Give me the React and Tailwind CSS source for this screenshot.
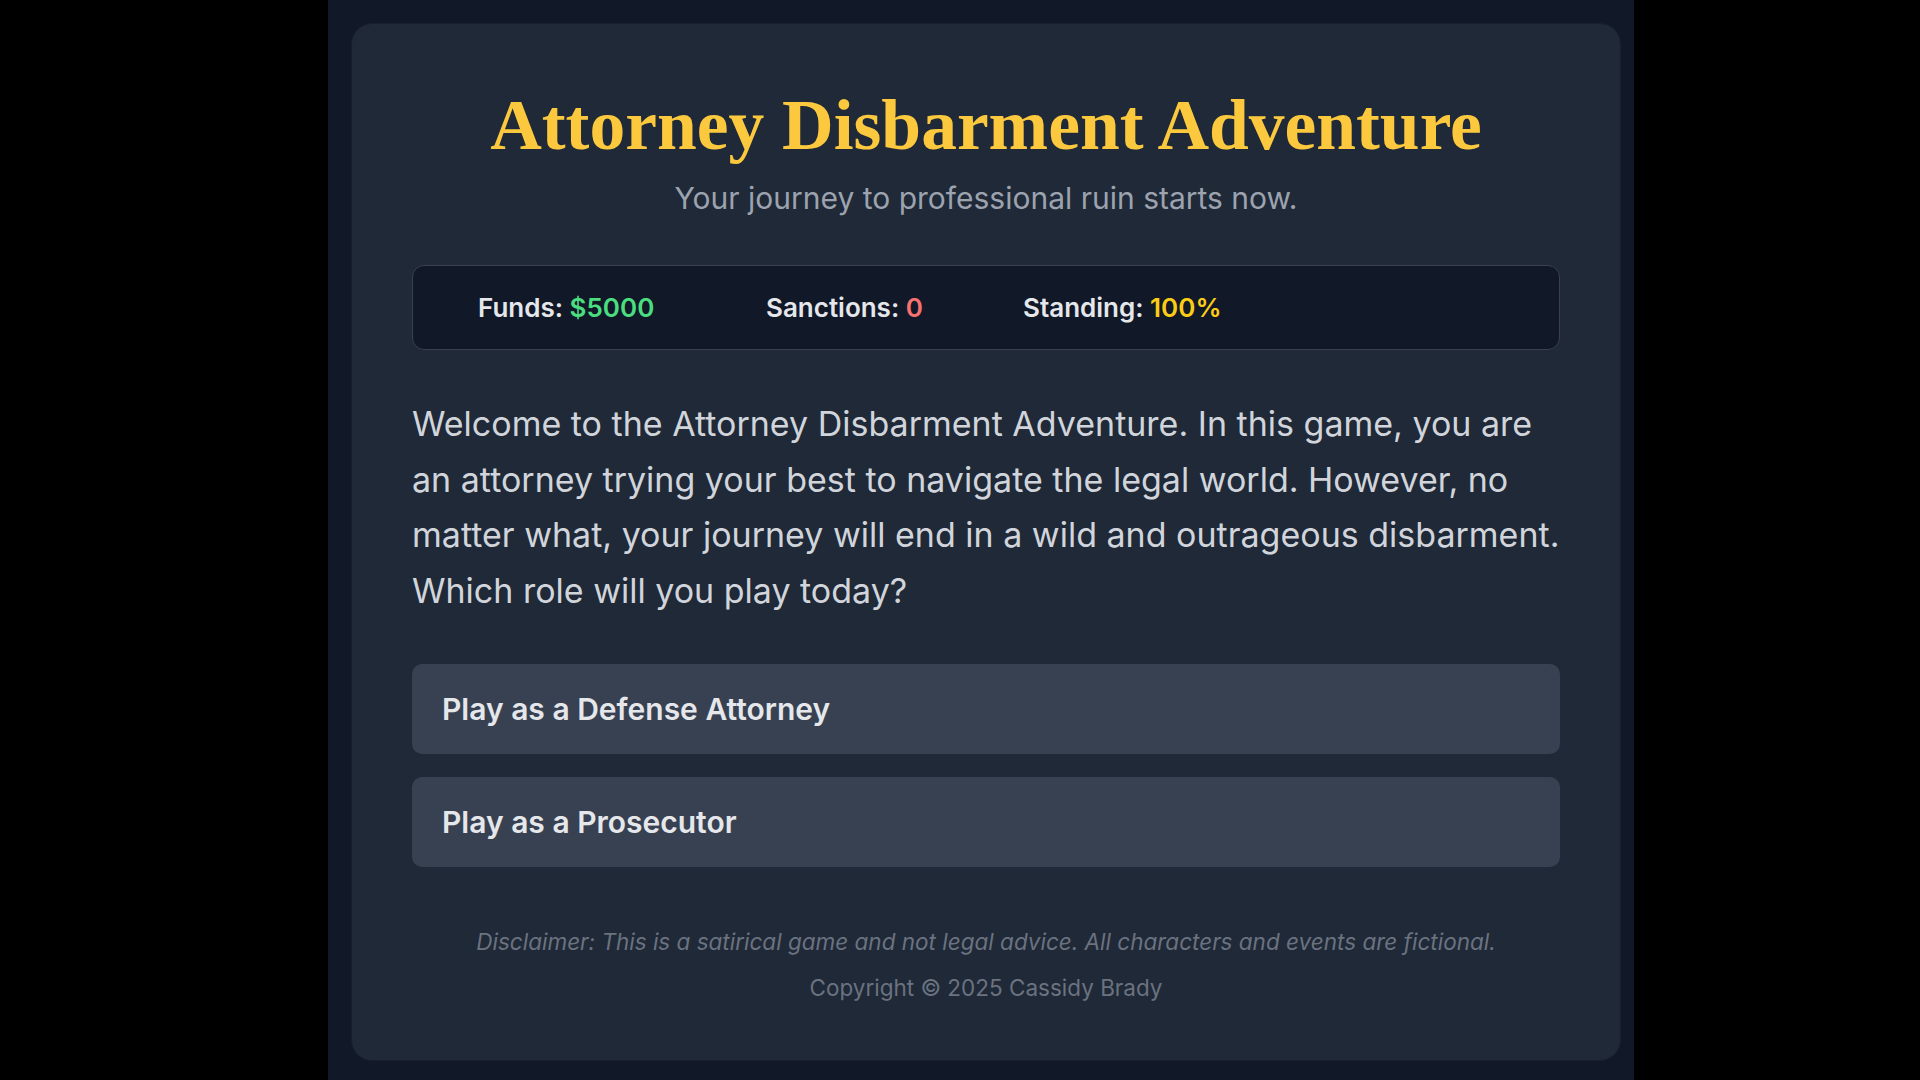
import React from 'react';

const stats = [
  { label: 'Funds', value: '$5000', tone: 'text-[#4ade80]', width: 'w-[288px]' },
  { label: 'Sanctions', value: '0', tone: 'text-[#f87171]', width: 'w-[257px]' },
  { label: 'Standing', value: '100%', tone: 'text-[#facc15]', width: 'w-auto' },
];

const roles = ['Play as a Defense Attorney', 'Play as a Prosecutor'];

export default function App() {
  return (
    <div className="flex min-h-screen bg-black font-['Inter','Liberation_Sans',sans-serif]">
      <div className="w-[328px] shrink-0" />
      <main className="w-[1306px] shrink-0 bg-[#111827] pl-[24px] pr-[14px] pt-[24px]">
        <section className="rounded-[20px] bg-[#1f2937] px-[60px] pt-[60px] pb-[57px] shadow-[0_0_0_1px_rgba(255,255,255,0.03)]">
          <header className="text-center">
            <h1 className="font-['Liberation_Serif','DejaVu_Serif',serif] text-[71.5px] font-bold leading-[82px] text-[#fcc93e]">
              Attorney Disbarment Adventure
            </h1>
            <p className="mt-[13px] text-[30px] leading-[38px] text-[#9ca3af]">
              Your journey to professional ruin starts now.
            </p>
          </header>

          {/* status bar */}
          <div className="mt-[48px] flex h-[85px] items-center rounded-[12px] border border-[#374151] bg-[#111827] pl-[65px]">
            {stats.map((s) => (
              <div key={s.label} className={`${s.width} text-[26px] font-semibold text-[#e5e7eb]`}>
                {s.label}: <span className={s.tone}>{s.value}</span>
              </div>
            ))}
          </div>

          <p className="mt-[46px] text-[34px] leading-[55.5px] text-[#d1d5db]">
            Welcome to the Attorney Disbarment Adventure. In this game, you are an attorney trying your best
            to navigate the legal world. However, no matter what, your journey will end in a wild and
            outrageous disbarment. Which role will you play today?
          </p>

          <div className="mt-[46px] flex flex-col gap-[23px]">
            {roles.map((r) => (
              <button
                key={r}
                className="h-[90px] w-full rounded-[10px] bg-[#374151] px-[30px] text-left text-[30px] font-semibold text-[#e5e7eb]"
              >
                {r}
              </button>
            ))}
          </div>

          <footer className="mt-[60px] text-center text-[22.5px] leading-[30px] text-[#6b7280]">
            <p className="italic">
              Disclaimer: This is a satirical game and not legal advice. All characters and events are fictional.
            </p>
            <p className="mt-[16px]">Copyright © 2025 Cassidy Brady</p>
          </footer>
        </section>
      </main>
    </div>
  );
}
